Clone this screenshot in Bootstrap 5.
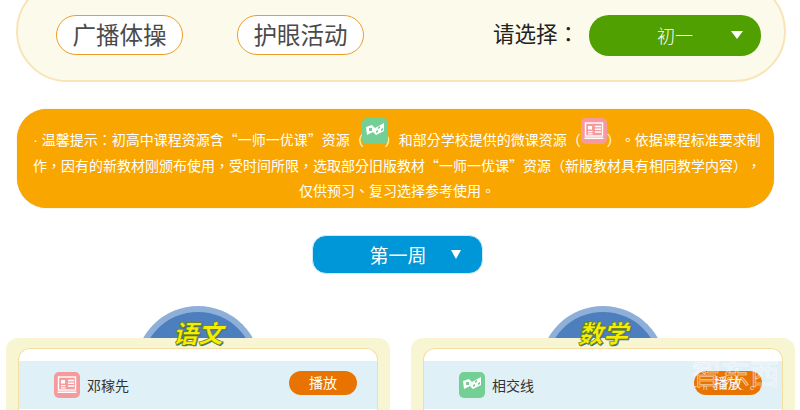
<!DOCTYPE html>
<html lang="zh-CN">
<head>
<meta charset="utf-8">
<title>课程</title>
<link href="https://cdn.jsdelivr.net/npm/bootstrap@5.3.0/dist/css/bootstrap.min.css" rel="stylesheet">
<style>
html,body{height:410px;overflow:hidden;background:#fff}
body{font-family:"Noto Sans CJK SC","Liberation Sans",sans-serif;position:relative}
.topbar{margin:-20px 14px 0 16px;height:102px;padding:7px 23px 0 38px;background:#fbfaeb;border:2px solid #f9e4b8;border-radius:52px}
.pillbtn{width:127px;height:40px;margin-right:54px;background:#fff;border:1.5px solid #ee9d29;border-radius:20px;font-size:23.5px;color:#4a4a4a;line-height:36px;text-align:center}
.chooselabel{font-family:"Noto Sans CJK TC",sans-serif;font-size:21.5px;color:#222;margin-right:10px;margin-top:-3px;text-spacing-trim:space-all}
.gradesel{width:172px;height:41px;margin-top:1px;background:#4fa000;border-radius:20px;color:#fff;font-size:18px;font-weight:300;position:relative;line-height:40px;text-align:center}
.tri{position:absolute;width:0;height:0;border-left:6.5px solid transparent;border-right:6.5px solid transparent;border-top:8px solid #fff}
.gradesel .tri{right:18px;top:16px}
.notice{font-family:"Noto Sans CJK TC",sans-serif;margin:27px 26px 0 17px;height:99px;background:#f9a600;border-radius:30px;color:#fff;font-size:14px;line-height:25px;text-align:center;padding:18px 0 0 3px;box-shadow:0 0 1px #c8a860;white-space:nowrap;text-spacing-trim:space-all}
.notice svg{width:26px;height:26px;vertical-align:-3px;margin-top:-16px;position:relative;top:-4px}
.notice .icfirst{margin-left:-2px;margin-right:-3px}
.dotmark{font-family:"Liberation Sans",sans-serif}
.weekwrap{margin-top:27px;padding-right:6px}
.weekbtn{width:171px;height:39px;background:#0097d9;border-radius:14px;color:#fff;font-size:19px;line-height:37px;text-align:center;position:relative;padding-left:2px;border:1px solid #d0ecf8}
.weekbtn .tri{right:21px;top:14px;border-left-width:5px;border-right-width:5px;border-top-width:9px}
.subjects{margin-top:32px;padding:0 5px 0 6px;gap:21px}
.subject{flex:1 1 0;position:relative}
.dome{width:126px;height:63px;margin:0 auto -31px;background:#4d7ebd;border:6px solid #8eb0d8;border-bottom:0;border-radius:63px 63px 0 0}
.subjtitle{position:absolute;left:0;right:0;top:10px;text-align:center;z-index:3;font-size:25px;font-weight:900;font-style:italic;color:#f5ee00;-webkit-text-stroke:.6px #57752c;line-height:32px;text-shadow:1px 1px 0 #3f6f86}
.framebox{position:relative;z-index:2;background:#f7f5d2;border-radius:12px 12px 0 0;padding:10px 12px 0;height:73px}
.innerbox{background:#fff;border:1.5px solid #f5dea0;border-bottom:0;border-radius:12px 12px 0 0;height:63px;padding-top:11.5px}
.lessonrow{height:48px;background:#e0f0f7;padding:0 20px 0 35px}
.lessonrow svg{width:26px;height:26px;margin-right:7px}
.lessonname{font-size:14px;color:#333;margin-top:1px}
.playbtn{width:68px;height:24px;margin-top:-4px;background:#e97300;border-radius:12px;color:#fff;font-size:14px;line-height:23px;text-align:center}
.wmark{position:absolute;left:692px;top:354px;width:92px;height:40px;z-index:5;color:#fff;opacity:.8;pointer-events:none}
.wmark .wmcn{position:absolute;left:0;top:4px;font-size:29px;line-height:29px;font-weight:400;color:rgba(255,255,255,.12);-webkit-text-stroke:.6px #fff;white-space:nowrap}
.wmark .wmen{position:absolute;left:1px;top:29px;font:8px/10px "Liberation Sans",sans-serif;letter-spacing:6px;color:#eee;white-space:nowrap}
.wmark svg{position:absolute;left:20px;top:-1px;width:26px;height:10px}
</style>
</head>
<body>
<svg width="0" height="0" class="position-absolute">
<defs>
<symbol id="icgreen" viewBox="0 0 26 26">
<rect width="26" height="26" rx="5" fill="#74cf95"/>
<path d="M4 9 L10 7 L13 10 L22 5 L22 13 L14 17 L11 14 L5 17 Z" fill="#fff"/>
<path d="M7 10h3v3H7z M16 9l2-1v2l-2 1z M19 11l2-1v2l-2 1z M14 13l2-1v2l-2 1z" fill="#74cf95"/>
</symbol>
<symbol id="icpink" viewBox="0 0 26 26">
<rect width="26" height="26" rx="5" fill="#f59a9d"/>
<rect x="4.5" y="5" width="17" height="13" fill="none" stroke="#fff" stroke-width="1.4"/>
<path d="M3.5 19.5h19v1.5h-19z M7 8h4v3.5H7z M7 13h4.5v1.2H7z M7 15.2h4.5v1.2H7z M14 7.8h6v1.5h-6z M14 10.5h6v1.5h-6z M14 13.2h6v1.5h-6z" fill="#fff"/>
</symbol>
</defs>
</svg>
<div class="topbar d-flex align-items-center">
<div class="pillbtn">广播体操</div>
<div class="pillbtn">护眼活动</div>
<div class="ms-auto d-flex align-items-center">
<div class="chooselabel" lang="zh-TW">请选择：</div>
<div class="gradesel"><span>初一</span><i class="tri"></i></div>
</div>
</div>
<div class="notice" lang="zh-TW"><span class="dotmark">· </span>温馨提示：初高中课程资源含“一师一优课”资源（<svg class="icfirst"><use href="#icgreen"/></svg>）和部分学校提供的微课资源（<svg><use href="#icpink"/></svg>）。依据课程标准要求制<br>作，因有的新教材刚颁布使用，受时间所限，选取部分旧版教材“一师一优课”资源（新版教材具有相同教学内容），<br>仅供预习、复习选择参考使用。</div>
<div class="weekwrap d-flex justify-content-center">
<div class="weekbtn">第一周<i class="tri"></i></div>
</div>
<div class="subjects d-flex">
<div class="subject">
<div class="subjtitle">语文</div>
<div class="dome"></div>
<div class="framebox"><div class="innerbox"><div class="lessonrow d-flex align-items-center"><svg><use href="#icpink"/></svg><div class="lessonname">邓稼先</div><div class="playbtn ms-auto">播放</div></div></div></div>
</div>
<div class="subject">
<div class="subjtitle">数学</div>
<div class="dome"></div>
<div class="framebox"><div class="innerbox"><div class="lessonrow d-flex align-items-center"><svg><use href="#icgreen"/></svg><div class="lessonname">相交线</div><div class="playbtn ms-auto">播放</div></div></div></div>
</div>
</div>
<div class="wmark">
<svg viewBox="0 0 26 12"><path d="M2 8C7 1 19 1 24 8M6 10C10 6 16 6 20 10" fill="none" stroke="#fff" stroke-width="1.3"/></svg>
<div class="wmcn">智东西</div>
<div class="wmen">zhidx.com</div>
</div>
</body>
</html>
